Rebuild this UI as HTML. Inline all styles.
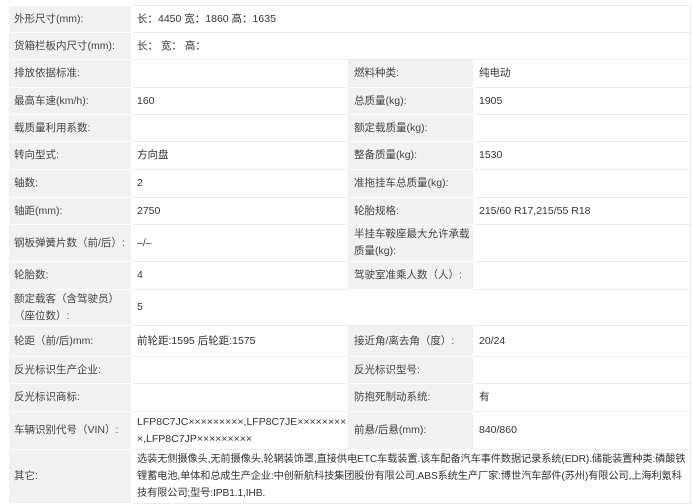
<!DOCTYPE html>
<html><head><meta charset="utf-8"><style>
html,body{margin:0;padding:0;background:#fff;width:693px;height:500px;overflow:hidden}
body{font-family:"Liberation Sans","Noto Sans CJK SC",sans-serif;font-size:10.5px;color:#333}
table{position:absolute;left:8px;top:5px;border-collapse:collapse;table-layout:fixed;width:682px}
td{border:1px solid #ececec;padding:0 0 0 5px;line-height:17px;vertical-align:middle;overflow:hidden}
td.l{background:#f1f1f1;color:#444;border-color:#fff #fff #fff #fff}
td.o{white-space:nowrap;font-size:10.2px;letter-spacing:-0.1px;padding-right:0}
</style></head><body>
<table>
<colgroup><col style="width:123px"><col style="width:217px"><col style="width:125px"><col style="width:217px"></colgroup>
<tr style="height:27px"><td class="l">外形尺寸(mm):</td><td colspan="3">长：4450 宽：1860 高：1635</td></tr>
<tr style="height:27px"><td class="l">货箱栏板内尺寸(mm):</td><td colspan="3">长： 宽： 高：</td></tr>
<tr style="height:28px"><td class="l">排放依据标准:</td><td></td><td class="l">燃料种类:</td><td>纯电动</td></tr>
<tr style="height:27px"><td class="l">最高车速(km/h):</td><td>160</td><td class="l">总质量(kg):</td><td>1905</td></tr>
<tr style="height:27px"><td class="l">载质量利用系数:</td><td></td><td class="l">额定载质量(kg):</td><td></td></tr>
<tr style="height:28px"><td class="l">转向型式:</td><td>方向盘</td><td class="l">整备质量(kg):</td><td>1530</td></tr>
<tr style="height:28px"><td class="l">轴数:</td><td>2</td><td class="l">准拖挂车总质量(kg):</td><td></td></tr>
<tr style="height:27px"><td class="l">轴距(mm):</td><td>2750</td><td class="l">轮胎规格:</td><td>215/60 R17,215/55 R18</td></tr>
<tr style="height:37px"><td class="l">钢板弹簧片数（前/后）:</td><td>–/–</td><td class="l">半挂车鞍座最大允许承载质量(kg):</td><td></td></tr>
<tr style="height:28px"><td class="l">轮胎数:</td><td>4</td><td class="l">驾驶室准乘人数（人）:</td><td></td></tr>
<tr style="height:36px"><td class="l">额定载客（含驾驶员）（座位数）:</td><td colspan="3">5</td></tr>
<tr style="height:31px"><td class="l">轮距（前/后)mm:</td><td>前轮距:1595 后轮距:1575</td><td class="l">接近角/离去角（度）:</td><td>20/24</td></tr>
<tr style="height:27px"><td class="l">反光标识生产企业:</td><td></td><td class="l">反光标识型号:</td><td></td></tr>
<tr style="height:28px"><td class="l">反光标识商标:</td><td></td><td class="l">防抱死制动系统:</td><td>有</td></tr>
<tr style="height:38px"><td class="l">车辆识别代号（VIN）:</td><td>LFP8C7JC×××××××××,LFP8C7JE××××××××<br>×,LFP8C7JP×××××××××</td><td class="l">前悬/后悬(mm):</td><td>840/860</td></tr>
<tr style="height:54px"><td class="l">其它:</td><td colspan="3" class="o">选装无侧摄像头,无前摄像头,轮辋装饰罩,直接供电ETC车载装置.该车配备汽车事件数据记录系统(EDR).储能装置种类:磷酸铁<br>锂蓄电池,单体和总成生产企业:中创新航科技集团股份有限公司.ABS系统生产厂家:博世汽车部件(苏州)有限公司,上海利氪科<br>技有限公司;型号:IPB1.1,IHB.</td></tr>
</table>
</body></html>
